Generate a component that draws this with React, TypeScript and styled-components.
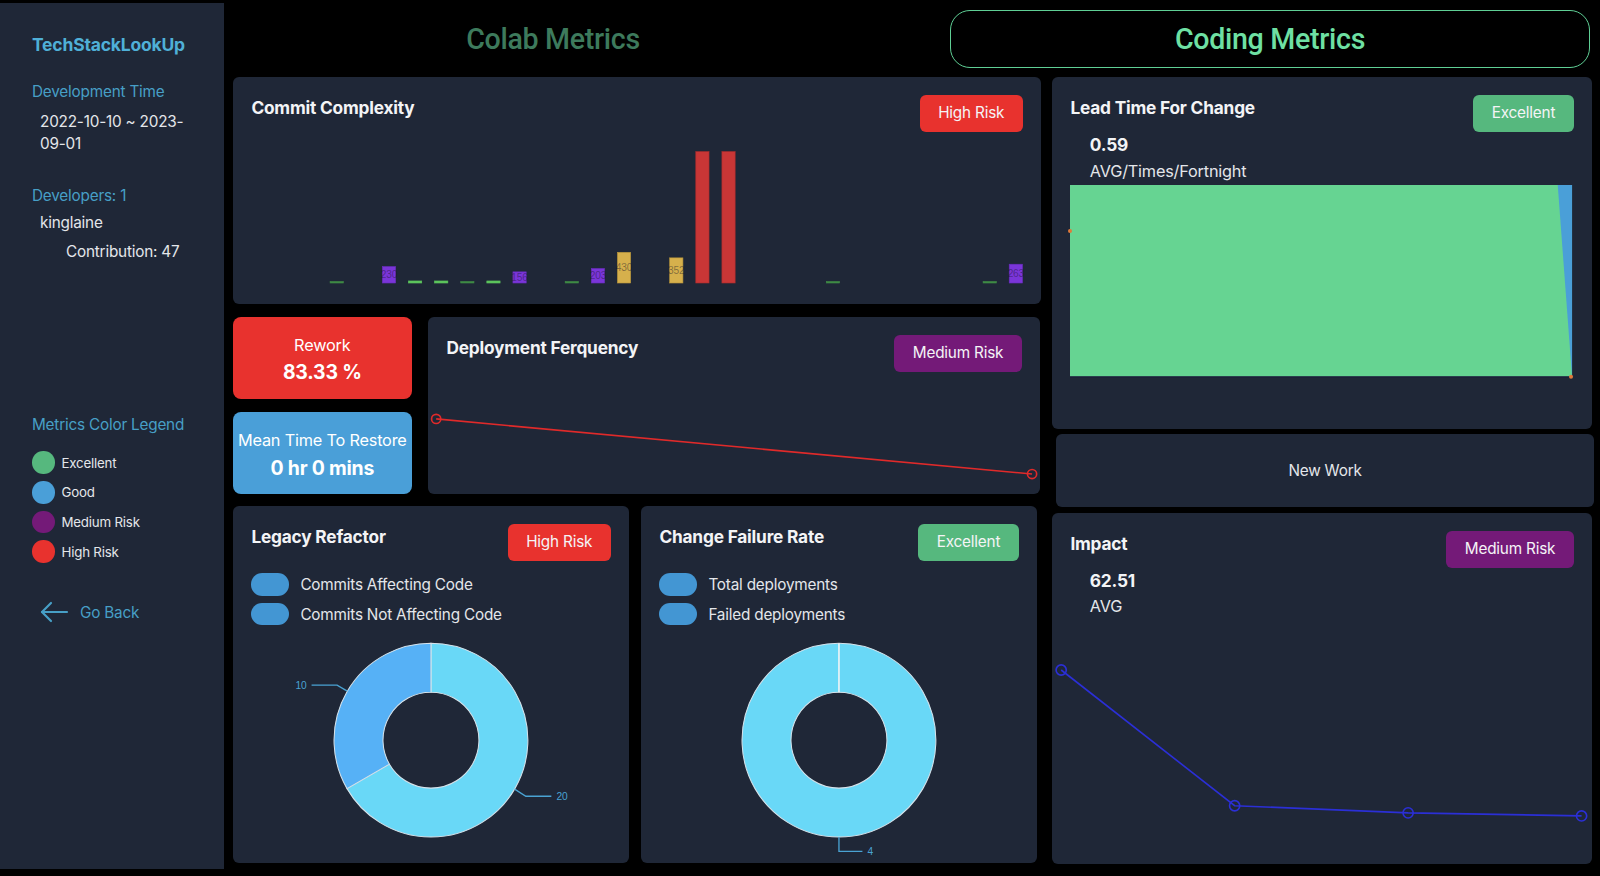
import React from 'react';
import styled, { createGlobalStyle } from 'styled-components';

// the charts were measured on a 1568px wide capture; K brings them to the 1600px page
const K = 1.0204;

const GlobalStyle = createGlobalStyle`
  html, body {
    margin: 0;
    padding: 0;
    background: #000;
  }
  body {
    font-family: 'Inter', 'Noto Sans', 'Liberation Sans', sans-serif;
    letter-spacing: -0.2px;
    color: #e6e8ec;
  }
`;

const tones: Record<string, string> = {
  excellent: '#56b87e',
  good: '#4a9fd8',
  medium: '#741a78',
  high: '#e8322e',
};

const Page = styled.div`
  display: flex;
  width: 1600px;
  height: 876px;
  background: #000;
  overflow: hidden;
`;

const Sidebar = styled.aside`
  width: 224px;
  height: 866px;
  margin-top: 3px;
  background: #1f2737;
  padding: 31px 0 0 32px;
  box-sizing: border-box;
  flex-shrink: 0;
`;

const Brand = styled.div`
  font-size: 17.5px;
  font-weight: 700;
  line-height: 22.5px;
  color: #4fb0d8;
`;

const SideLabel = styled.div<{ $gap: number }>`
  margin-top: ${p => p.$gap}px;
  font-size: 15.3px;
  line-height: 22.5px;
  color: #479fc6;
`;

const SideValue = styled.div<{ $indent: number; $gap: number }>`
  margin-top: ${p => p.$gap}px;
  padding-left: ${p => p.$indent}px;
  font-size: 15.3px;
  line-height: 22.5px;
  color: #e4e6ea;
`;

const LegendList = styled.div`
  display: flex;
  flex-direction: column;
  gap: 7.2px;
  margin-top: 15.3px;
`;

const LegendRow = styled.div`
  display: flex;
  align-items: center;
  gap: 7px;
  height: 22.5px;
`;

const Dot = styled.span<{ $color: string }>`
  width: 22.5px;
  height: 22.5px;
  border-radius: 50%;
  background: ${p => p.$color};
`;

const LegendText = styled.span`
  font-size: 13.3px;
  color: #e4e6ea;
`;

const BackLink = styled.div`
  display: flex;
  align-items: center;
  gap: 11px;
  margin-top: 37.8px;
  padding-left: 7px;
  height: 22.5px;
  font-size: 15.3px;
  color: #479fc6;
`;

const Main = styled.main`
  flex: 1;
  padding-left: 9px;
`;

const Header = styled.div`
  display: grid;
  grid-template-columns: 640px 640px;
  column-gap: 77px;
  padding-top: 10px;
  height: 58px;
  margin-bottom: 9px;
`;

const Tab = styled.div<{ $active?: boolean }>`
  display: flex;
  align-items: center;
  justify-content: center;
  border-radius: 20px;
  border: 1.5px solid ${p => (p.$active ? '#5fcf95' : 'transparent')};
  font-family: 'Roboto', 'Liberation Sans', sans-serif;
  font-size: 28.6px;
  font-weight: 500;
  letter-spacing: -0.3px;
  color: ${p => (p.$active ? '#6ee0a3' : '#3d7a5c')};
`;

const Board = styled.div`
  display: grid;
  grid-template-columns: 808px 540px;
  column-gap: 11px;
`;

const Column = styled.div`
  display: flex;
  flex-direction: column;
`;

const Card = styled.section<{ $height: number; $gap?: number }>`
  position: relative;
  height: ${p => p.$height}px;
  margin-top: ${p => p.$gap ?? 0}px;
  background: #1f2737;
  border-radius: 6px;
  padding: 18.4px;
  box-sizing: border-box;
  display: flex;
  flex-direction: column;
  flex-shrink: 0;
`;

const CardHead = styled.div`
  display: flex;
  justify-content: space-between;
  align-items: flex-start;
  height: 36.7px;
  flex-shrink: 0;
`;

const CardTitle = styled.h3`
  margin: 0;
  font-size: 17.3px;
  font-weight: 700;
  line-height: 25px;
  color: #f3f4f6;
`;

const Badge = styled.span<{ $tone: string }>`
  height: 36.7px;
  line-height: 36.7px;
  padding: 0 18.4px;
  border-radius: 6px;
  background: ${p => tones[p.$tone]};
  color: #f4f4f6;
  font-size: 15.3px;
`;

const StatValue = styled.div`
  margin-top: 1px;
  padding-left: 19.4px;
  font-size: 17.3px;
  font-weight: 700;
  line-height: 24.5px;
  color: #f3f4f6;
`;

const StatUnit = styled.div`
  margin-top: 2px;
  padding-left: 19.4px;
  font-size: 16.3px;
  line-height: 22.5px;
  color: #e4e6ea;
`;

const MiddleRow = styled.div`
  display: grid;
  grid-template-columns: 178.6px 612px;
  column-gap: 16.4px;
  margin-top: 13px;
  height: 177.5px;
`;

const StatStack = styled.div`
  display: flex;
  flex-direction: column;
  gap: 13.5px;
`;

const StatCard = styled.div<{ $tone: string }>`
  height: 82px;
  border-radius: 8px;
  background: ${p => tones[p.$tone]};
  padding-top: 16.3px;
  box-sizing: border-box;
  text-align: center;
  color: #fff;
`;

const StatLabel = styled.div`
  font-size: 16.3px;
  line-height: 24.5px;
  white-space: nowrap;
`;

const StatNumber = styled.div`
  margin-top: 1px;
  font-size: 19.4px;
  font-weight: 700;
  line-height: 28.5px;
`;

const BottomRow = styled.div`
  display: grid;
  grid-template-columns: 396px 396px;
  column-gap: 12px;
  margin-top: 12px;
`;

const ChartLegend = styled.div`
  display: flex;
  flex-direction: column;
  gap: 7.2px;
  margin-top: 12.2px;
`;

const ChartLegendRow = styled.div`
  display: flex;
  align-items: center;
  gap: 11.2px;
  height: 22.5px;
  font-size: 15.3px;
  color: #e4e6ea;
`;

const Pill = styled.span`
  width: 37.8px;
  height: 22.5px;
  border-radius: 11.25px;
  background: #4396d3;
`;

const Bleed = styled.div<{ $top?: number }>`
  margin: ${p => p.$top ?? 0}px -18.4px 0;
`;

const AreaWrap = styled.div`
  margin-top: 3px;
`;

const NewWork = styled.div`
  height: 72.5px;
  margin: 5px -2px 0 4px;
  background: #1f2737;
  border-radius: 6px;
  display: flex;
  align-items: center;
  justify-content: center;
  font-size: 15.3px;
  color: #e4e6ea;
  flex-shrink: 0;
`;

const Chart = ({ w, h, children }: { w: number; h: number; children: React.ReactNode }) => (
  <svg width={w * K} height={h * K} viewBox={`0 0 ${w} ${h}`} style={{ overflow: 'visible', display: 'block' }}>
    {children}
  </svg>
);

type Bar = { slot: number; value: number; kind: 'dash' | 'green' | 'purple' | 'yellow' | 'red'; label?: boolean };

const commits: Bar[] = [
  { slot: 0, value: 0, kind: 'dash' },
  { slot: 2, value: 230, kind: 'purple', label: true },
  { slot: 3, value: 28, kind: 'green' },
  { slot: 4, value: 28, kind: 'green' },
  { slot: 5, value: 0, kind: 'dash' },
  { slot: 6, value: 28, kind: 'green' },
  { slot: 7, value: 156, kind: 'purple', label: true },
  { slot: 9, value: 0, kind: 'dash' },
  { slot: 10, value: 203, kind: 'purple', label: true },
  { slot: 11, value: 430, kind: 'yellow', label: true },
  { slot: 13, value: 352, kind: 'yellow', label: true },
  { slot: 14, value: 1840, kind: 'red' },
  { slot: 15, value: 1840, kind: 'red' },
  { slot: 19, value: 0, kind: 'dash' },
  { slot: 25, value: 0, kind: 'dash' },
  { slot: 26, value: 263, kind: 'purple', label: true },
];

const barFill = { dash: '#3f8a45', green: '#5cc45c', purple: '#7a35d8', yellow: '#d6b04c', red: '#c93636' };
const barEdge = { dash: '#3f8a45', green: '#5cc45c', purple: '#6a2cc0', yellow: '#b8953a', red: '#a82c2c' };

const CommitChart = () => {
  const base = 148;
  return (
    <Chart w={755} h={150}>
      {commits.map(b => {
        const h = b.kind === 'dash' ? 1.5 : Math.max(2, b.value * 0.07);
        const cx = 84 + b.slot * 25.6;
        return (
          <g key={b.slot}>
            <rect x={cx - 6.5} y={base - h} width={13} height={h} fill={barFill[b.kind]} stroke={barEdge[b.kind]} strokeWidth={0.6} />
            {b.label && (
              <text x={cx} y={base - h / 2 + 3.5} textAnchor="middle" fontSize={10} fill="rgba(20,20,40,0.45)" fontFamily="Liberation Sans, sans-serif">
                {b.value}
              </text>
            )}
          </g>
        );
      })}
    </Chart>
  );
};

const LineChart = ({ points, color, w, h, r }: { points: [number, number][]; color: string; w: number; h: number; r: number }) => (
  <Chart w={w} h={h}>
    <polyline points={points.map(p => p.join(',')).join(' ')} fill="none" stroke={color} strokeWidth={1.6} />
    {points.map(([x, y]) => (
      <circle key={x} cx={x} cy={y} r={r} fill="none" stroke={color} strokeWidth={1.6} />
    ))}
  </Chart>
);

const polar = (cx: number, cy: number, r: number, a: number): [number, number] => {
  const rad = (a * Math.PI) / 180;
  return [cx + r * Math.sin(rad), cy - r * Math.cos(rad)];
};

const arc = (cx: number, cy: number, R: number, r: number, a0: number, a1: number) => {
  const large = a1 - a0 > 180 ? 1 : 0;
  const [x0, y0] = polar(cx, cy, R, a0);
  const [x1, y1] = polar(cx, cy, R, a1);
  const [x2, y2] = polar(cx, cy, r, a1);
  const [x3, y3] = polar(cx, cy, r, a0);
  return `M${x0} ${y0} A${R} ${R} 0 ${large} 1 ${x1} ${y1} L${x2} ${y2} A${r} ${r} 0 ${large} 0 ${x3} ${y3} Z`;
};

const leader = '#4aa3d3';

const RefactorDonut = () => (
  <Chart w={388} h={220}>
    <path d={arc(194, 106, 95, 47, 0, 240)} fill="#69d8f7" stroke="#d6e2ea" strokeWidth={1} />
    <path d={arc(194, 106, 95, 47, 240, 360)} fill="#56b1f6" stroke="#d6e2ea" strokeWidth={1} />
    <polyline points="112,58 102,52 77,52" fill="none" stroke={leader} strokeWidth={1.3} />
    <text x={72} y={55.5} textAnchor="end" fontSize={10} fill={leader} fontFamily="Liberation Sans, sans-serif">10</text>
    <polyline points="276,154 287,161 312,161" fill="none" stroke={leader} strokeWidth={1.3} />
    <text x={317} y={164.5} fontSize={10} fill={leader} fontFamily="Liberation Sans, sans-serif">20</text>
  </Chart>
);

const FailureDonut = () => (
  <Chart w={388} h={220}>
    <path
      d="M194 11 A95 95 0 1 1 193.99 11 Z M194 59 A47 47 0 1 0 194.01 59 Z"
      fill="#69d8f7"
      fillRule="evenodd"
      stroke="#d6e2ea"
      strokeWidth={1}
    />
    <line x1={194} y1={11} x2={194} y2={59} stroke="#eef3f6" strokeWidth={1.6} />
    <polyline points="194,201 194,215 217,215" fill="none" stroke={leader} strokeWidth={1.3} />
    <text x={222} y={218.5} fontSize={10} fill={leader} fontFamily="Liberation Sans, sans-serif">4</text>
  </Chart>
);

const LeadArea = () => (
  <Chart w={492} h={190}>
    <rect x={0} y={0} width={492} height={188} fill="#66d492" />
    <polygon points="478,0 492,0 492,188" fill="#4a9fd8" />
    <line x1={0} y1={188} x2={492} y2={188} stroke="#1a1a3a" strokeWidth={1.2} />
    <circle cx={0} cy={45} r={2} fill="#e07a3a" />
    <circle cx={491} cy={188} r={2} fill="#e07a3a" />
  </Chart>
);

const ArrowLeft = () => (
  <svg width={30} height={22} viewBox="0 0 30 22" fill="none" stroke="#479fc6" strokeWidth={2.2} strokeLinecap="round" strokeLinejoin="round">
    <path d="M28 11H3" />
    <path d="M12 2L3 11l9 9" />
  </svg>
);

const legend = [
  { label: 'Excellent', tone: 'excellent' },
  { label: 'Good', tone: 'good' },
  { label: 'Medium Risk', tone: 'medium' },
  { label: 'High Risk', tone: 'high' },
];

const App: React.FC = () => (
  <>
    <GlobalStyle />
    <Page>
      <Sidebar>
        <Brand>TechStackLookUp</Brand>
        <SideLabel $gap={24.5}>Development Time</SideLabel>
        <SideValue $indent={8} $gap={7}>
          2022-10-10 ~ 2023-
          <br />
          09-01
        </SideValue>
        <SideLabel $gap={29.6}>Developers: 1</SideLabel>
        <SideValue $indent={8} $gap={4}>kinglaine</SideValue>
        <SideValue $indent={34} $gap={7}>Contribution: 47</SideValue>
        <SideLabel $gap={150}>Metrics Color Legend</SideLabel>
        <LegendList>
          {legend.map(l => (
            <LegendRow key={l.label}>
              <Dot $color={tones[l.tone]} />
              <LegendText>{l.label}</LegendText>
            </LegendRow>
          ))}
        </LegendList>
        <BackLink>
          <ArrowLeft />
          Go Back
        </BackLink>
      </Sidebar>

      <Main>
        <Header>
          <Tab>Colab Metrics</Tab>
          <Tab $active>Coding Metrics</Tab>
        </Header>

        <Board>
          <Column>
            <Card $height={226.5}>
              <CardHead>
                <CardTitle>Commit Complexity</CardTitle>
                <Badge $tone="high">High Risk</Badge>
              </CardHead>
              <CommitChart />
            </Card>

            <MiddleRow>
              <StatStack>
                <StatCard $tone="high">
                  <StatLabel>Rework</StatLabel>
                  <StatNumber>83.33 %</StatNumber>
                </StatCard>
                <StatCard $tone="good">
                  <StatLabel>Mean Time To Restore</StatLabel>
                  <StatNumber>0 hr 0 mins</StatNumber>
                </StatCard>
              </StatStack>
              <Card $height={177.5}>
                <CardHead>
                  <CardTitle>Deployment Ferquency</CardTitle>
                  <Badge $tone="medium">Medium Risk</Badge>
                </CardHead>
                <Bleed>
                  <LineChart w={600} h={102} r={4.5} color="#e02a2a" points={[[8, 46], [592, 100]]} />
                </Bleed>
              </Card>
            </MiddleRow>

            <BottomRow>
              <Card $height={357}>
                <CardHead>
                  <CardTitle>Legacy Refactor</CardTitle>
                  <Badge $tone="high">High Risk</Badge>
                </CardHead>
                <ChartLegend>
                  <ChartLegendRow><Pill />Commits Affecting Code</ChartLegendRow>
                  <ChartLegendRow><Pill />Commits Not Affecting Code</ChartLegendRow>
                </ChartLegend>
                <Bleed $top={7}>
                  <RefactorDonut />
                </Bleed>
              </Card>
              <Card $height={357}>
                <CardHead>
                  <CardTitle>Change Failure Rate</CardTitle>
                  <Badge $tone="excellent">Excellent</Badge>
                </CardHead>
                <ChartLegend>
                  <ChartLegendRow><Pill />Total deployments</ChartLegendRow>
                  <ChartLegendRow><Pill />Failed deployments</ChartLegendRow>
                </ChartLegend>
                <Bleed $top={7}>
                  <FailureDonut />
                </Bleed>
              </Card>
            </BottomRow>
          </Column>

          <Column>
            <Card $height={352}>
              <CardHead>
                <CardTitle>Lead Time For Change</CardTitle>
                <Badge $tone="excellent">Excellent</Badge>
              </CardHead>
              <StatValue>0.59</StatValue>
              <StatUnit>AVG/Times/Fortnight</StatUnit>
              <AreaWrap>
                <LeadArea />
              </AreaWrap>
            </Card>
            <NewWork>New Work</NewWork>
            <Card $height={351} $gap={6}>
              <CardHead>
                <CardTitle>Impact</CardTitle>
                <Badge $tone="medium">Medium Risk</Badge>
              </CardHead>
              <StatValue>62.51</StatValue>
              <StatUnit>AVG</StatUnit>
              <Bleed $top={2}>
                <LineChart w={528} h={223} r={5} color="#2b2fd6" points={[[9, 49], [179, 182], [349, 189], [519, 192]]} />
              </Bleed>
            </Card>
          </Column>
        </Board>
      </Main>
    </Page>
  </>
);

export default App;
